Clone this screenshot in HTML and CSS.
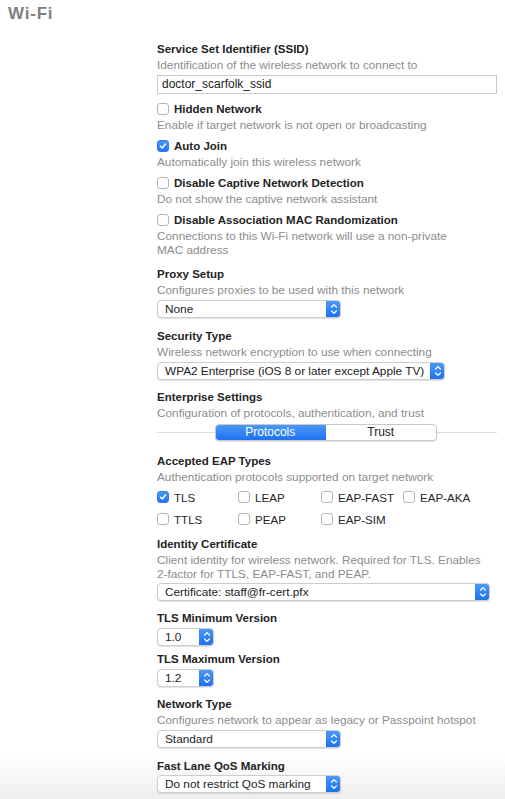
FILE: index.html
```html
<!DOCTYPE html>
<html lang="en">
<head>
    <meta charset="UTF-8">
    <meta name="viewport" content="width=device-width, initial-scale=1.0">
    <title>Wi-Fi</title>
    <link rel="stylesheet" href="styles.css">
</head>
<body>
    <h1 class="page-title">Wi-Fi</h1>

    <div class="form">
        <div class="field">
            <div class="label">Service Set Identifier (SSID)</div>
            <div class="desc">Identification of the wireless network to connect to</div>
            <div class="textfield">doctor_scarfolk_ssid</div>
        </div>

        <div class="check-field first">
            <div class="check-row"><span class="box"></span><span class="label">Hidden Network</span></div>
            <div class="desc">Enable if target network is not open or broadcasting</div>
        </div>
        <div class="check-field">
            <div class="check-row"><span class="box checked"><svg viewBox="0 0 12 12"><path d="M3 6.3 L5.1 8.4 L9 3.6"/></svg></span><span class="label">Auto Join</span></div>
            <div class="desc">Automatically join this wireless network</div>
        </div>
        <div class="check-field">
            <div class="check-row"><span class="box"></span><span class="label">Disable Captive Network Detection</span></div>
            <div class="desc">Do not show the captive network assistant</div>
        </div>
        <div class="check-field">
            <div class="check-row"><span class="box"></span><span class="label">Disable Association MAC Randomization</span></div>
            <div class="desc">Connections to this Wi-Fi network will use a non-private<br>MAC address</div>
        </div>

        <div class="field">
            <div class="label">Proxy Setup</div>
            <div class="desc">Configures proxies to be used with this network</div>
            <div class="popup w-md">
                <span class="popup-value">None</span>
                <span class="popup-arrows"><svg viewBox="0 0 8 14"><path d="M1.6 5 L4 2.6 L6.4 5 M1.6 9 L4 11.4 L6.4 9"/></svg></span>
            </div>
        </div>

        <div class="field wide">
            <div class="label">Security Type</div>
            <div class="desc">Wireless network encryption to use when connecting</div>
            <div class="popup w-lg">
                <span class="popup-value">WPA2 Enterprise (iOS 8 or later except Apple TV)</span>
                <span class="popup-arrows"><svg viewBox="0 0 8 14"><path d="M1.6 5 L4 2.6 L6.4 5 M1.6 9 L4 11.4 L6.4 9"/></svg></span>
            </div>
        </div>

        <div class="field">
            <div class="label">Enterprise Settings</div>
            <div class="desc">Configuration of protocols, authentication, and trust</div>
            <div class="tabs">
                <div class="segmented">
                    <span class="segment active">Protocols</span>
                    <span class="segment">Trust</span>
                </div>
            </div>
        </div>

        <div class="field">
            <div class="label">Accepted EAP Types</div>
            <div class="desc">Authentication protocols supported on target network</div>
            <div class="eap-grid">
                <div class="check-row"><span class="box checked"><svg viewBox="0 0 12 12"><path d="M3 6.3 L5.1 8.4 L9 3.6"/></svg></span><span>TLS</span></div>
                <div class="check-row"><span class="box"></span><span>LEAP</span></div>
                <div class="check-row"><span class="box"></span><span>EAP-FAST</span></div>
                <div class="check-row"><span class="box"></span><span>EAP-AKA</span></div>
                <div class="check-row"><span class="box"></span><span>TTLS</span></div>
                <div class="check-row"><span class="box"></span><span>PEAP</span></div>
                <div class="check-row"><span class="box"></span><span>EAP-SIM</span></div>
            </div>
        </div>

        <div class="field wide">
            <div class="label">Identity Certificate</div>
            <div class="desc">Client identity for wireless network. Required for TLS. Enables<br>2-factor for TTLS, EAP-FAST, and PEAP.</div>
            <div class="popup tight w-xl">
                <span class="popup-value">Certificate: staff@fr-cert.pfx</span>
                <span class="popup-arrows"><svg viewBox="0 0 8 14"><path d="M1.6 5 L4 2.6 L6.4 5 M1.6 9 L4 11.4 L6.4 9"/></svg></span>
            </div>
        </div>

        <div class="field">
            <div class="label">TLS Minimum Version</div>
            <div class="popup w-sm">
                <span class="popup-value">1.0</span>
                <span class="popup-arrows"><svg viewBox="0 0 8 14"><path d="M1.6 5 L4 2.6 L6.4 5 M1.6 9 L4 11.4 L6.4 9"/></svg></span>
            </div>
        </div>

        <div class="field near">
            <div class="label">TLS Maximum Version</div>
            <div class="popup w-sm">
                <span class="popup-value">1.2</span>
                <span class="popup-arrows"><svg viewBox="0 0 8 14"><path d="M1.6 5 L4 2.6 L6.4 5 M1.6 9 L4 11.4 L6.4 9"/></svg></span>
            </div>
        </div>

        <div class="field">
            <div class="label">Network Type</div>
            <div class="desc">Configures network to appear as legacy or Passpoint hotspot</div>
            <div class="popup w-md">
                <span class="popup-value">Standard</span>
                <span class="popup-arrows"><svg viewBox="0 0 8 14"><path d="M1.6 5 L4 2.6 L6.4 5 M1.6 9 L4 11.4 L6.4 9"/></svg></span>
            </div>
        </div>

        <div class="field wide">
            <div class="label">Fast Lane QoS Marking</div>
            <div class="popup tight w-md">
                <span class="popup-value">Do not restrict QoS marking</span>
                <span class="popup-arrows"><svg viewBox="0 0 8 14"><path d="M1.6 5 L4 2.6 L6.4 5 M1.6 9 L4 11.4 L6.4 9"/></svg></span>
            </div>
        </div>
    </div>
</body>
</html>
```

FILE: styles.css
```css
* {
    margin: 0;
    box-sizing: border-box;
}

html {
    background: #fff;
}

body {
    min-height: 100vh;
    font-family: "Liberation Sans", Arial, sans-serif;
    color: #262626;
    background: linear-gradient(to bottom, #fff 0, #fff 755px, #eeeeee 799px);
    overflow: hidden;
}

.page-title {
    padding: 4px 0 0 8px;
    font-size: 17px;
    line-height: 20px;
    font-weight: bold;
    letter-spacing: 0.8px;
    color: #808080;
}

.form {
    width: 340px;
    margin: 18px 0 0 157px;
}

/* labelled blocks */

.field {
    margin-top: 10px;
}

.field:first-child {
    margin-top: 0;
}

.field.wide {
    margin-top: 11px;
}

.field.near {
    margin-top: 6px;
}

.label {
    font-size: 11.5px;
    line-height: 14px;
    font-weight: bold;
    color: #232323;
}

.desc {
    margin-top: 2px;
    font-size: 11.8px;
    line-height: 14px;
    color: #8c8c8c;
}

.field > .textfield {
    margin-top: 3px;
}

.field > .popup {
    margin-top: 3px;
}

.field > .popup.tight {
    margin-top: 2px;
}

.textfield {
    height: 19px;
    padding-left: 4px;
    border: 1px solid #c9c9c9;
    font-size: 12px;
    line-height: 17px;
    color: #222;
    background: #fff;
}

/* checkboxes */

.check-field {
    margin-top: 7px;
}

.check-field.first {
    margin-top: 8px;
}

.check-row {
    display: flex;
    align-items: center;
    gap: 5px;
    height: 14px;
}

.box {
    flex: none;
    display: flex;
    width: 12px;
    height: 12px;
    border: 1px solid #b4b4b4;
    border-radius: 3px;
    background: #fff;
}

.box.checked {
    border-color: #2d7cf6;
    background: linear-gradient(#4b97f9, #2572f2);
}

.box svg {
    width: 10px;
    height: 10px;
    fill: none;
    stroke: #fff;
    stroke-width: 1.8;
    stroke-linecap: round;
    stroke-linejoin: round;
}

.eap-grid {
    display: grid;
    grid-template-columns: 81px 83px 82px auto;
    row-gap: 8px;
    margin-top: 6px;
    font-size: 11.6px;
    color: #262626;
}

/* pop-up buttons */

.popup {
    display: flex;
    height: 18px;
    border: 1px solid #cdcdcd;
    border-radius: 4px;
    background: #fff;
    box-shadow: 0 1px 1px rgba(0, 0, 0, 0.12);
    font-size: 11.8px;
    overflow: hidden;
}

.popup-value {
    flex: 1;
    padding-left: 7px;
    line-height: 16px;
    color: #222;
    white-space: nowrap;
}

.popup-arrows {
    flex: none;
    display: flex;
    align-items: center;
    justify-content: center;
    width: 15px;
    margin: -1px -1px -1px 0;
    background: linear-gradient(#4c9bfa, #1b6ff1);
}

.popup-arrows svg {
    width: 8px;
    height: 14px;
    fill: none;
    stroke: #fff;
    stroke-width: 1.3;
    stroke-linecap: round;
    stroke-linejoin: round;
}

.w-sm {
    width: 57px;
}

.w-md {
    width: 184px;
}

.w-lg {
    width: 288px;
}

.w-xl {
    width: 333px;
}

/* tab selector: a rule through the middle of the segmented control */

.tabs {
    display: flex;
    margin-top: 4px;
    padding-bottom: 3px;
    background: linear-gradient(#dcdcdc, #dcdcdc) 0 8px / 100% 1px no-repeat;
}

.segmented {
    display: flex;
    width: 222px;
    height: 17px;
    margin-left: 58px;
    border: 1px solid #c8c8c8;
    border-radius: 4px;
    background: #fff;
    box-shadow: 0 1px 1px rgba(0, 0, 0, 0.1);
    overflow: hidden;
    font-size: 12px;
}

.segment {
    flex: 1;
    text-align: center;
    line-height: 15px;
    color: #222;
}

.segment.active {
    margin: -1px 0 -1px -1px;
    line-height: 17px;
    color: #fff;
    background: linear-gradient(#4c9bfa, #1b6ff1);
}
```
